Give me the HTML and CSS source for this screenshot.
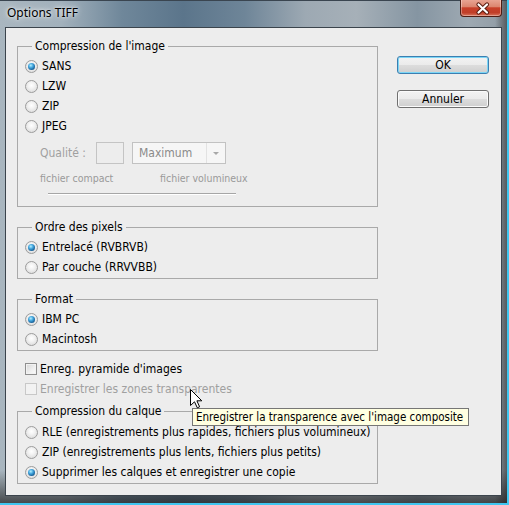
FILE: index.html
```html
<!DOCTYPE html>
<html lang="fr">
<head>
<meta charset="utf-8">
<title>Options TIFF</title>
<link rel="stylesheet" href="styles.css">
</head>
<body>
<div class="window">
  <div class="titlebar">
    <span class="title">Options TIFF</span>
    <div class="close">
      <svg width="42" height="18" viewBox="0 0 42 18">
        <path d="M17.5 4.5 L26 12.5 M26 4.5 L17.5 12.5" stroke="#5a1c10" stroke-width="4.2" stroke-linecap="round" fill="none"/>
        <path d="M17.5 4.5 L26 12.5 M26 4.5 L17.5 12.5" stroke="#ffffff" stroke-width="2.2" stroke-linecap="round" fill="none"/>
      </svg>
    </div>
  </div>
  <div class="client">
    <div class="main">
      <fieldset class="group g1">
        <legend>Compression de l'image</legend>
        <div class="opt"><span class="radio on"></span>SANS</div>
        <div class="opt"><span class="radio"></span>LZW</div>
        <div class="opt"><span class="radio"></span>ZIP</div>
        <div class="opt"><span class="radio"></span>JPEG</div>
        <div class="quality">
          <span class="qlabel">Qualité :</span>
          <span class="qbox"></span>
          <span class="select"><span class="sel-text">Maximum</span><span class="sel-arrow"></span></span>
        </div>
        <div class="scale"><span class="scale-left">fichier compact</span><span>fichier volumineux</span></div>
        <div class="slider"></div>
      </fieldset>
      <fieldset class="group">
        <legend>Ordre des pixels</legend>
        <div class="opt"><span class="radio on"></span>Entrelacé (RVBRVB)</div>
        <div class="opt"><span class="radio"></span>Par couche (RRVVBB)</div>
      </fieldset>
      <fieldset class="group">
        <legend>Format</legend>
        <div class="opt"><span class="radio on"></span>IBM PC</div>
        <div class="opt"><span class="radio"></span>Macintosh</div>
      </fieldset>
      <div class="checks">
        <div class="opt copt"><span class="check"></span>Enreg. pyramide d'images</div>
        <div class="opt copt disabled"><span class="check off"></span>Enregistrer les zones transparentes</div>
      </div>
      <fieldset class="group g4">
        <legend>Compression du calque</legend>
        <div class="opt"><span class="radio"></span>RLE (enregistrements plus rapides, fichiers plus volumineux)</div>
        <div class="opt"><span class="radio"></span>ZIP (enregistrements plus lents, fichiers plus petits)</div>
        <div class="opt"><span class="radio on"></span>Supprimer les calques et enregistrer une copie</div>
      </fieldset>
    </div>
    <div class="buttons">
      <button class="btn default">OK</button>
      <button class="btn">Annuler</button>
    </div>
    <div class="tooltip">Enregistrer la transparence avec l'image composite</div>
    <svg class="cursor" width="13" height="20" viewBox="0 0 13 20">
      <path d="M0.5 0.5 L0.5 16.5 L4.5 12.8 L7.3 18.8 L9.6 17.8 L6.9 11.8 L11.8 11.8 Z" fill="#ffffff" stroke="#000000" stroke-width="1" stroke-linejoin="miter"/>
    </svg>
  </div>
</div>
</body>
</html>
```

FILE: styles.css
```css
* { box-sizing: border-box; }
html, body { margin: 0; padding: 0; }
body {
  width: 509px;
  height: 505px;
  overflow: hidden;
  font-family: "DejaVu Sans Condensed", "DejaVu Sans", sans-serif;
  font-stretch: condensed;
  font-size: 12px;
  color: #000;
}
.window {
  width: 509px;
  height: 505px;
  display: flex;
  flex-direction: column;
  padding: 0 7px 9px 5px;
  background:
    linear-gradient(180deg, rgba(0,0,0,0) 0, rgba(0,0,0,0) 470px, rgba(30,30,30,0.75) 505px),
    linear-gradient(90deg, rgba(0,0,0,0) 0, rgba(0,0,0,0) 495px, rgba(30,30,30,0.6) 509px),
    linear-gradient(90deg, #a9b6bf 0%, #a2b1bc 12%, #6f879a 24%, #5b758b 36%, #6e8598 48%, #9da9b3 60%, #a6b0b8 70%, #8595a2 82%, #9ea9b2 92%, #8e99a2 100%);
  box-shadow: inset -2px -2px 0 #3fc6f0, inset 0 1px 0 #3a4550;
}
.titlebar {
  height: 27px;
  display: flex;
  justify-content: space-between;
  align-items: flex-start;
}
.title {
  font-family: "Noto Sans", "Open Sans", sans-serif;
  font-stretch: normal;
  font-size: 12px;
  line-height: 14px;
  margin: 6px 0 0 2px;
  text-shadow: 0 0 6px rgba(255,255,255,0.9), 0 0 3px rgba(255,255,255,0.8);
}
.close {
  width: 42px;
  height: 18px;
  margin-top: -1px;
  border: 1px solid #4e1d14;
  border-top: none;
  border-radius: 0 0 4px 4px;
  background: linear-gradient(180deg, #eaa898 0%, #dc8670 45%, #c8402a 52%, #c03e28 80%, #d8745c 100%);
  box-shadow: inset 0 0 0 1px rgba(255,255,255,0.35);
}
.close svg { display: block; margin-top: 1px; }
.client {
  flex: 1;
  position: relative;
  display: flex;
  gap: 19px;
  padding: 11px 12px 0 11px;
  border: 1px solid #3b444c;
  background: #ededed;
}
.main {
  width: 361px;
  display: flex;
  flex-direction: column;
}
.group {
  margin: 0;
  min-width: 0;
  border: 1px solid #a9a9a9;
  padding: 3px 7px 1px 7px;
}
.group + .group { margin-top: 13px; }
.group legend {
  padding: 0 3px;
  margin-left: 7px;
  height: 14px;
  line-height: 14px;
}
.g1 { padding-bottom: 11px; }
.g4 { padding-top: 4px; margin-top: 5px; }
.opt {
  height: 20px;
  display: flex;
  align-items: center;
  gap: 4px;
  white-space: nowrap;
}
.radio {
  width: 13px;
  height: 13px;
  flex: none;
  border-radius: 50%;
  border: 1px solid #9c9c9c;
  background: radial-gradient(circle at 50% 40%, #ffffff 0, #f3f3f3 35%, #d4d4d4 100%);
  display: flex;
  align-items: center;
  justify-content: center;
}
.radio.on::after {
  content: "";
  width: 7px;
  height: 7px;
  border-radius: 50%;
  background: radial-gradient(circle at 40% 35%, #b4f0ff 0, #46a8df 35%, #125a92 75%, #0f3858 100%);
}
.quality {
  display: flex;
  align-items: center;
  height: 22px;
  margin-top: 6px;
  padding-left: 15px;
  color: #a0a0a0;
}
.qlabel { width: 56px; }
.qbox {
  width: 28px;
  height: 22px;
  border: 1px solid #c4c4c4;
  margin-right: 8px;
}
.select {
  width: 94px;
  height: 22px;
  display: flex;
  border: 1px solid #c2c2c2;
  background: #f6f6f6;
  color: #8a8a8a;
}
.sel-text {
  flex: 1;
  padding-left: 6px;
  line-height: 20px;
}
.sel-arrow {
  width: 19px;
  border-left: 1px solid #e2e2e2;
  display: flex;
  align-items: center;
  justify-content: center;
}
.sel-arrow::after {
  content: "";
  border-left: 3px solid transparent;
  border-right: 3px solid transparent;
  border-top: 3px solid #a8a8a8;
}
.scale {
  display: flex;
  height: 14px;
  line-height: 14px;
  margin-top: 7px;
  padding-left: 15px;
  color: #9a9a9a;
  font-size: 10.5px;
}
.scale-left { width: 120px; }
.slider {
  margin: 8px 0 0 23px;
  width: 188px;
  height: 2px;
  border-top: 1px solid #a6a6a6;
  border-bottom: 1px solid #ffffff;
}
.checks {
  margin-top: 8px;
  padding-left: 8px;
}
.copt { gap: 3px; }
.check {
  width: 12px;
  height: 12px;
  flex: none;
  border: 1px solid #8f8f8f;
  background: linear-gradient(135deg, #d6d6d6 0%, #f0f0f0 60%, #fbfbfb 100%);
  box-shadow: inset 0 0 0 1px #f2f2f2;
}
.check.off {
  border-color: #c8c8c8;
  background: #f2f2f2;
  box-shadow: none;
}
.disabled { color: #a0a0a0; }
.buttons {
  display: flex;
  flex-direction: column;
  gap: 16px;
  padding-top: 17px;
}
.btn {
  width: 92px;
  height: 18px;
  padding: 0;
  font: inherit;
  font-stretch: condensed;
  font-size: 12px;
  line-height: 16px;
  color: #000;
  border: 1px solid #707070;
  border-radius: 3px;
  background: linear-gradient(180deg, #f3f3f3 0%, #ebebeb 50%, #dddddd 51%, #cfcfcf 100%);
  box-shadow: inset 0 0 0 1px #fbfbfb;
}
.btn.default {
  border-color: #3c7fb1;
  box-shadow: inset 0 0 0 1px #7cd6f6;
}
.tooltip {
  position: absolute;
  left: 186px;
  top: 380px;
  width: 277px;
  height: 18px;
  padding: 0 3px;
  font-size: 11.5px;
  line-height: 16px;
  white-space: nowrap;
  border: 1px solid #767676;
  background: #ffffe1;
  color: #000;
}
.cursor {
  position: absolute;
  left: 184px;
  top: 361px;
}
```
